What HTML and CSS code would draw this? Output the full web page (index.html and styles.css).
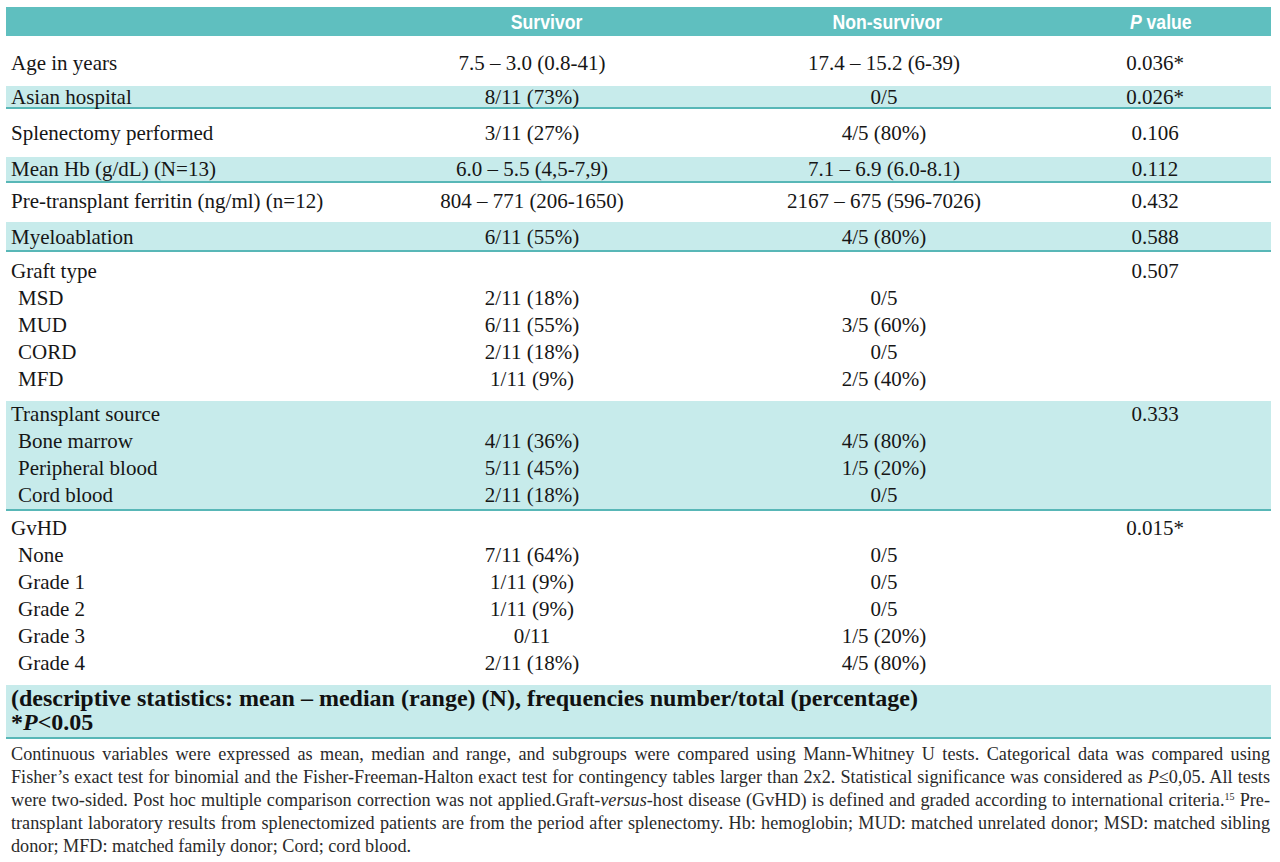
FILE: index.html
```html
<!DOCTYPE html>
<html lang="en">
<head>
<meta charset="utf-8">
<title>Survivor vs non-survivor</title>
<link rel="stylesheet" href="styles.css">
</head>
<body>
<div class="page">
<table class="tbl">
  <colgroup>
    <col class="c-label"><col class="c-surv"><col class="c-non"><col class="c-p">
  </colgroup>
  <thead>
    <tr><th></th><th class="h-surv"><span class="hx">Survivor</span></th><th class="h-non"><span class="hx">Non-survivor</span></th><th class="h-p"><span class="hx"><i>P</i> value</span></th></tr>
  </thead>
  <tbody class="single r-age">
    <tr><td>Age in years</td><td>7.5 – 3.0 (0.8-41)</td><td>17.4 – 15.2 (6-39)</td><td>0.036*</td></tr>
  </tbody>
  <tbody class="single shade r-asian">
    <tr><td>Asian hospital</td><td>8/11 (73%)</td><td>0/5</td><td>0.026*</td></tr>
  </tbody>
  <tbody class="single r-splen">
    <tr><td>Splenectomy performed</td><td>3/11 (27%)</td><td>4/5 (80%)</td><td>0.106</td></tr>
  </tbody>
  <tbody class="single shade r-hb">
    <tr><td>Mean Hb (g/dL) (N=13)</td><td>6.0 – 5.5 (4,5-7,9)</td><td>7.1 – 6.9 (6.0-8.1)</td><td>0.112</td></tr>
  </tbody>
  <tbody class="single r-ferr">
    <tr><td>Pre-transplant ferritin (ng/ml) (n=12)</td><td>804 – 771 (206-1650)</td><td>2167 – 675 (596-7026)</td><td>0.432</td></tr>
  </tbody>
  <tbody class="single shade r-myelo">
    <tr><td>Myeloablation</td><td>6/11 (55%)</td><td>4/5 (80%)</td><td>0.588</td></tr>
  </tbody>
  <tbody class="group r-graft">
    <tr><td>Graft type</td><td></td><td></td><td>0.507</td></tr>
    <tr><td class="sub">MSD</td><td>2/11 (18%)</td><td>0/5</td><td></td></tr>
    <tr><td class="sub">MUD</td><td>6/11 (55%)</td><td>3/5 (60%)</td><td></td></tr>
    <tr><td class="sub">CORD</td><td>2/11 (18%)</td><td>0/5</td><td></td></tr>
    <tr><td class="sub">MFD</td><td>1/11 (9%)</td><td>2/5 (40%)</td><td></td></tr>
  </tbody>
  <tbody class="group shade r-source">
    <tr><td>Transplant source</td><td></td><td></td><td>0.333</td></tr>
    <tr><td class="sub">Bone marrow</td><td>4/11 (36%)</td><td>4/5 (80%)</td><td></td></tr>
    <tr><td class="sub">Peripheral blood</td><td>5/11 (45%)</td><td>1/5 (20%)</td><td></td></tr>
    <tr><td class="sub">Cord blood</td><td>2/11 (18%)</td><td>0/5</td><td></td></tr>
  </tbody>
  <tbody class="group r-gvhd">
    <tr><td>GvHD</td><td></td><td></td><td>0.015*</td></tr>
    <tr><td class="sub">None</td><td>7/11 (64%)</td><td>0/5</td><td></td></tr>
    <tr><td class="sub">Grade 1</td><td>1/11 (9%)</td><td>0/5</td><td></td></tr>
    <tr><td class="sub">Grade 2</td><td>1/11 (9%)</td><td>0/5</td><td></td></tr>
    <tr><td class="sub">Grade 3</td><td>0/11</td><td>1/5 (20%)</td><td></td></tr>
    <tr><td class="sub">Grade 4</td><td>2/11 (18%)</td><td>4/5 (80%)</td><td></td></tr>
  </tbody>
  <tbody class="shade foot">
    <tr><td colspan="4">(descriptive statistics: mean – median (range) (N), frequencies number/total (percentage)<br>*<i>P</i>&lt;0.05</td></tr>
  </tbody>
</table>
<div class="notes">
  <p class="jl">Continuous variables were expressed as mean, median and range, and subgroups were compared using Mann-Whitney U tests. Categorical data was compared using</p>
  <p class="jl">Fisher’s exact test for binomial and the Fisher-Freeman-Halton exact test for contingency tables larger than 2x2. Statistical significance was considered as <i>P</i>≤0,05. All tests</p>
  <p class="jl">were two-sided. Post hoc multiple comparison correction was not applied.Graft-<i>versus</i>-host disease (GvHD) is defined and graded according to international criteria.<sup>15</sup> Pre-</p>
  <p class="jl">transplant laboratory results from splenectomized patients are from the period after splenectomy. Hb: hemoglobin; MUD: matched unrelated donor; MSD: matched sibling</p>
  <p>donor; MFD: matched family donor; Cord; cord blood.</p>
</div>
</div>
</body>
</html>
```

FILE: styles.css
```css
html, body {
  margin: 0;
  padding: 0;
  background: #ffffff;
}

.page {
  padding: 7px 9px 0 6px;
  font-family: "Liberation Serif", "Times New Roman", serif;
  color: #161616;
}

.tbl {
  width: 1265px;
  border-collapse: collapse;
  border-spacing: 0;
  table-layout: fixed;
  font-size: 21px;
}

.c-label { width: 384px; }
.c-surv { width: 284px; }
.c-non { width: 420px; }
.c-p { width: 177px; }

.tbl thead th {
  background: #5fbfbf;
  color: #ffffff;
  font-family: "Liberation Sans", Arial, sans-serif;
  font-weight: bold;
  font-size: 21px;
  height: 29px;
  padding: 0;
  line-height: 29px;
  text-align: center;
}

.hx {
  display: inline-block;
  transform: scaleX(0.84);
  transform-origin: center;
}

.tbl thead th.h-surv { padding-left: 30px; }
.tbl thead th.h-non { padding-left: 6px; }
.tbl thead th.h-p { padding-right: 44px; }

.tbl td {
  padding: 0;
  text-align: center;
  white-space: nowrap;
}

.tbl td:first-child {
  text-align: left;
  padding-left: 5px;
}

.tbl td:last-child {
  padding-right: 55px;
}

.tbl td.sub {
  padding-left: 12px;
}

.shade {
  background: #c7ebeb;
  border-bottom: 2px solid #58b7b7;
}

/* single-line rows */
.single td { line-height: 24px; }
.single.shade td { line-height: 20px; }

.r-age td { padding-top: 15px; padding-bottom: 11px; }
.r-asian td { padding-top: 1px; padding-bottom: 0; }
.r-splen td { padding-top: 12px; padding-bottom: 12px; }
.r-hb td { padding-top: 2px; padding-bottom: 2px; }
.r-ferr td { padding-top: 6px; padding-bottom: 9px; }
.r-myelo td { padding-top: 5px; padding-bottom: 3px; }

/* grouped rows */
.group td { line-height: 27px; }
.r-graft tr:first-child td { padding-top: 6px; }
.r-graft tr:last-child td { padding-bottom: 8px; }
.r-source tr:first-child td { padding-top: 0; }
.r-source tr:last-child td { padding-bottom: 0; }
.r-gvhd tr:first-child td { padding-top: 4px; }
.r-gvhd tr:last-child td { padding-bottom: 8px; }

.foot td {
  font-weight: bold;
  font-size: 24px;
  line-height: 24px;
  padding-top: 1px;
  padding-bottom: 3px;
  color: #111111;
}

.notes {
  width: 1259px;
  padding-left: 5px;
  padding-top: 4px;
  font-size: 18.2px;
  line-height: 23px;
  color: #2a2a2a;
}

.notes p {
  margin: 0;
}

.notes p.jl {
  text-align: justify;
  text-align-last: justify;
}

.notes sup {
  font-size: 10px;
  line-height: 0;
  vertical-align: 6px;
}
```
